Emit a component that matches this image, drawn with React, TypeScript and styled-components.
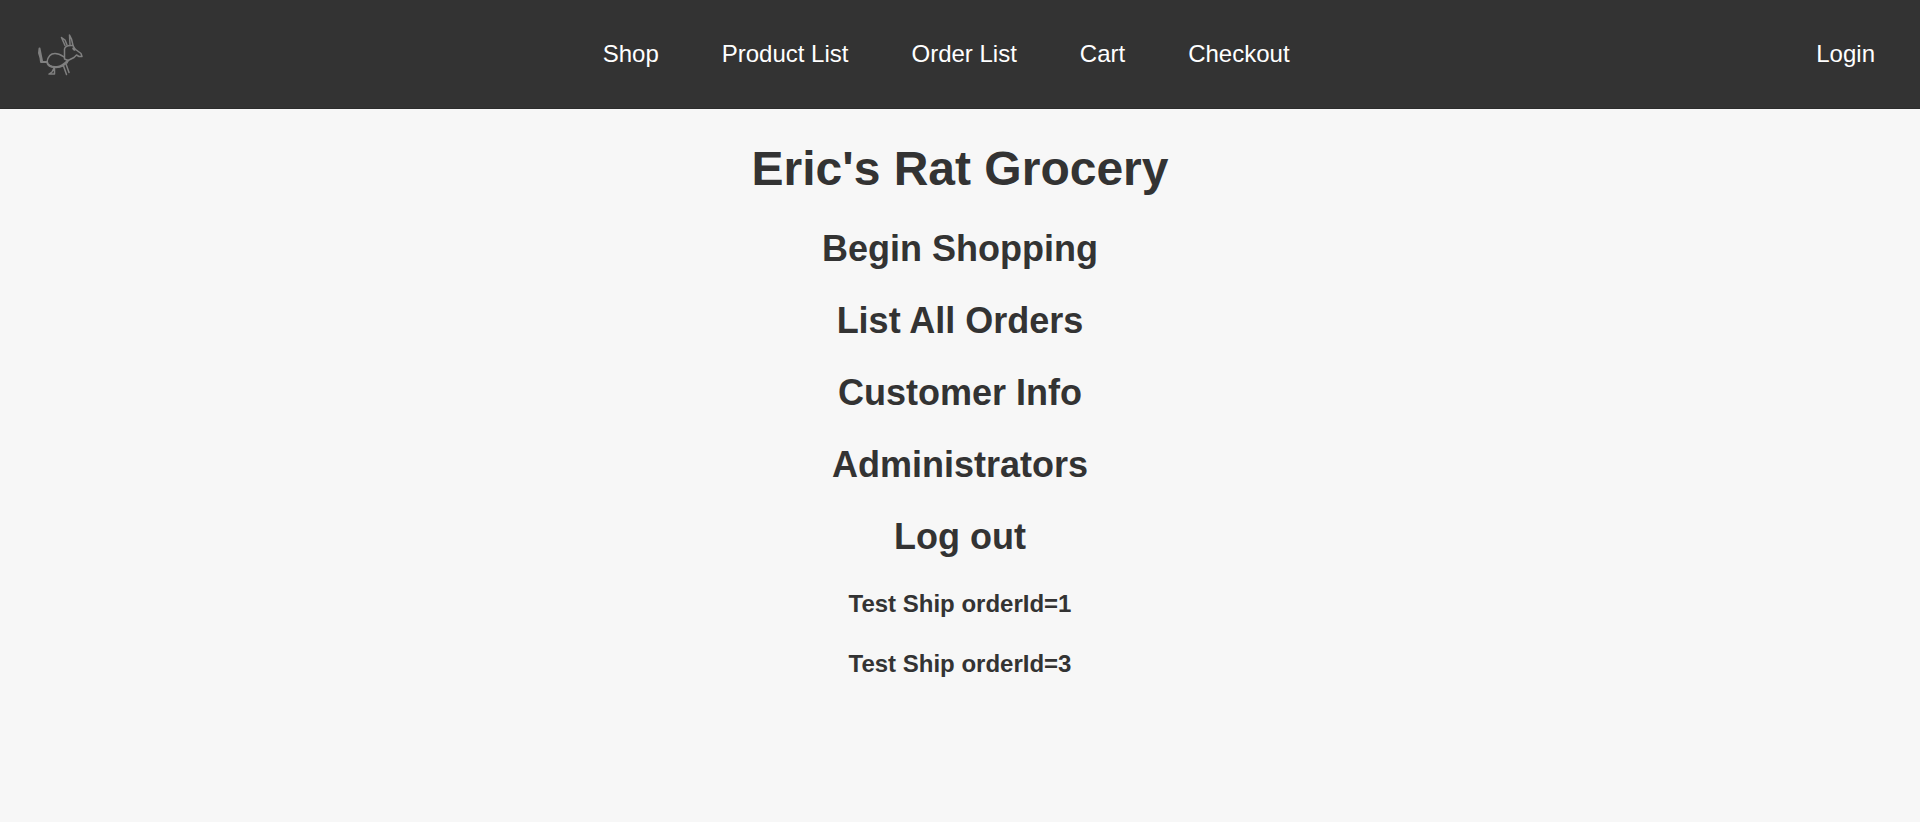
import React from "react";
import styled, { createGlobalStyle } from "styled-components";

const GlobalStyle = createGlobalStyle`
  body {
    margin: 0;
    background: #f7f7f7;
    color: #333;
    font-family: "Liberation Sans", Arial, sans-serif;
    font-size: 24px;
  }
`;

const Header = styled.header`
  display: flex;
  align-items: center;
  justify-content: space-between;
  padding: 29px 14px;
  background: #333;
  border-bottom: 1px solid #2c2c2c;
`;

const LogoLink = styled.a`
  display: flex;
  padding: 0 21px 0 22px;
`;

const Logo = styled.svg`
  width: 50px;
  height: 50px;
  fill: none;
  stroke: #808080;
  stroke-linecap: round;
  stroke-linejoin: round;
`;

const NavList = styled.ul`
  display: flex;
  gap: 1px;
  margin: 0;
  padding: 0;
  list-style: none;
`;

const NavLink = styled.a`
  display: block;
  padding: 0 31px;
  color: #fff;
  line-height: 32px;
  text-decoration: none;
`;

const Main = styled.main`
  padding: 0 16px;
  text-align: center;
`;

const Title = styled.h1`
  margin: 32px 0;
  font-size: 48px;
  line-height: 55px;
`;

const MenuHeading = styled.h2`
  margin: 30px 0;
  font-size: 36px;
  line-height: 42px;
`;

const TestHeading = styled.h4`
  margin: 32px 0;
  font-size: 24px;
  line-height: 28px;
`;

const PlainLink = styled.a`
  color: inherit;
  text-decoration: none;
`;

const navItems = ["Shop", "Product List", "Order List", "Cart", "Checkout"];
const menuItems = ["Begin Shopping", "List All Orders", "Customer Info", "Administrators", "Log out"];
const testOrders = [1, 3];

const RatLogo = () => (
  <Logo viewBox="36 29 50 50" aria-hidden="true">
    <path strokeWidth="2" d="M39.5 48.5L39 53L40.5 58L41 62L47 62M39.5 48.5L41 56L42 61" />
    <path strokeWidth="1.5" d="M47 62C48 56 51 53.5 55 53.5C59 53.5 61 55 64 57" />
    <path strokeWidth="2" d="M47 62C48 66 52 67.5 57 67C62 66.5 66 62.5 68 60.5" />
    <path strokeWidth="1.5" d="M49 65C54 69 62 68 66 63" />
    <path strokeWidth="1.5" d="M54 68L52 72L49 74L54.5 74L54.5 68" />
    <path strokeWidth="1.5" d="M63.5 66L66.5 74.5M66 64L69 72.5" />
    <path strokeWidth="1.5" d="M64.5 59L64.5 49C65 46 68 45 73 45.5L75 49L81 53.5L82 56.5L79 56.5L76.5 55L74 57.5L68 60.5L64.5 59M68 60.5L67 63" />
    <path strokeWidth="1.5" d="M65 45.5L61.5 37.5L65 40L67 45M70 44.5L69.5 35L71.5 39L73 45.5" />
    <path strokeWidth="2.5" d="M73.5 48.5L74.5 49.5" />
  </Logo>
);

export default function App() {
  return (
    <>
      <GlobalStyle />
      <Header>
        <LogoLink href="#" aria-label="Home">
          <RatLogo />
        </LogoLink>
        <nav>
          <NavList>
            {navItems.map((item) => (
              <li key={item}>
                <NavLink href="#">{item}</NavLink>
              </li>
            ))}
          </NavList>
        </nav>
        <NavLink href="#">Login</NavLink>
      </Header>
      <Main>
        <Title>Eric's Rat Grocery</Title>
        {menuItems.map((item) => (
          <MenuHeading key={item}>
            <PlainLink href="#">{item}</PlainLink>
          </MenuHeading>
        ))}
        {testOrders.map((id) => (
          <TestHeading key={id}>
            <PlainLink href="#">{`Test Ship orderId=${id}`}</PlainLink>
          </TestHeading>
        ))}
      </Main>
    </>
  );
}
